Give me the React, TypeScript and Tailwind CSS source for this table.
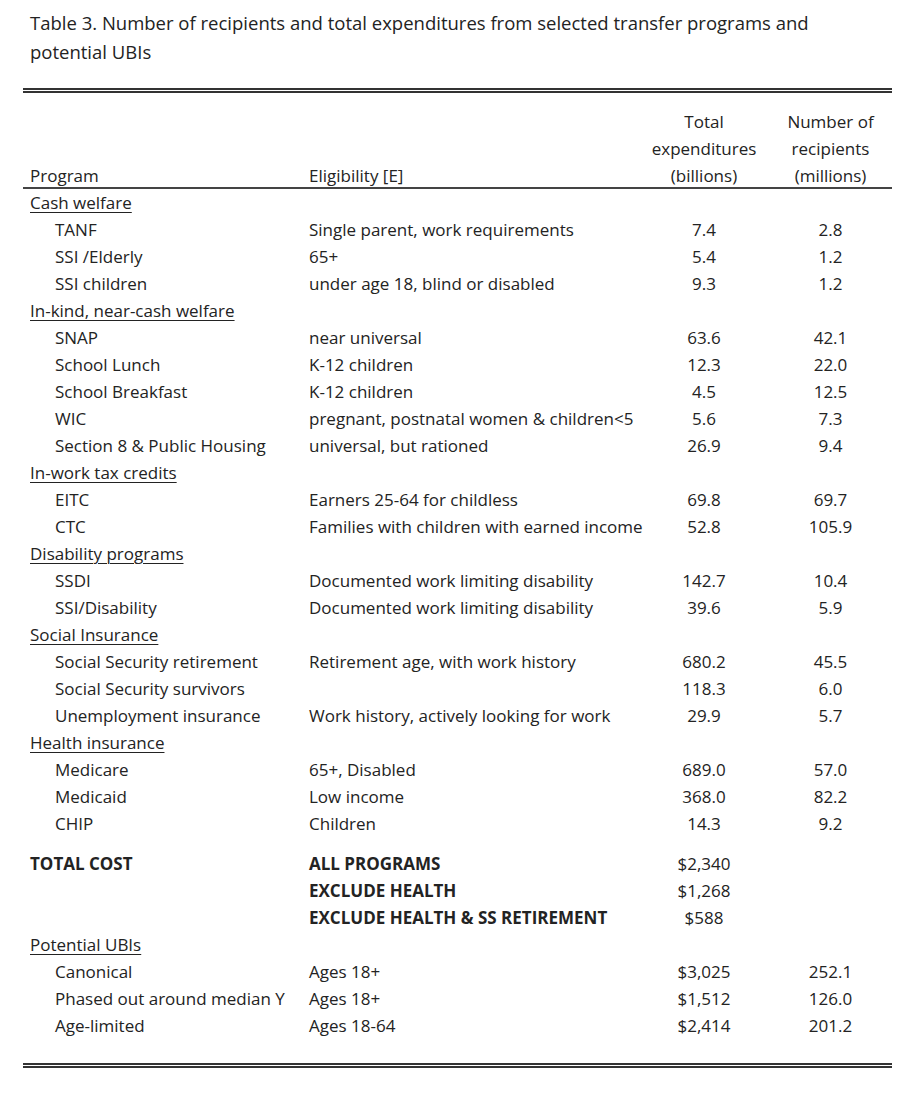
type Row = {
  name: string
  elig?: string
  exp?: string
  rec?: string
}

type Group = {
  title: string
  rows: Row[]
}

const groups: Group[] = [
  {
    title: 'Cash welfare',
    rows: [
      { name: 'TANF', elig: 'Single parent, work requirements', exp: '7.4', rec: '2.8' },
      { name: 'SSI /Elderly', elig: '65+', exp: '5.4', rec: '1.2' },
      { name: 'SSI children', elig: 'under age 18, blind or disabled', exp: '9.3', rec: '1.2' },
    ],
  },
  {
    title: 'In-kind, near-cash welfare',
    rows: [
      { name: 'SNAP', elig: 'near universal', exp: '63.6', rec: '42.1' },
      { name: 'School Lunch', elig: 'K-12 children', exp: '12.3', rec: '22.0' },
      { name: 'School Breakfast', elig: 'K-12 children', exp: '4.5', rec: '12.5' },
      { name: 'WIC', elig: 'pregnant, postnatal women & children<5', exp: '5.6', rec: '7.3' },
      { name: 'Section 8 & Public Housing', elig: 'universal, but rationed', exp: '26.9', rec: '9.4' },
    ],
  },
  {
    title: 'In-work tax credits',
    rows: [
      { name: 'EITC', elig: 'Earners 25-64 for childless', exp: '69.8', rec: '69.7' },
      { name: 'CTC', elig: 'Families with children with earned income', exp: '52.8', rec: '105.9' },
    ],
  },
  {
    title: 'Disability programs',
    rows: [
      { name: 'SSDI', elig: 'Documented work limiting disability', exp: '142.7', rec: '10.4' },
      { name: 'SSI/Disability', elig: 'Documented work limiting disability', exp: '39.6', rec: '5.9' },
    ],
  },
  {
    title: 'Social Insurance',
    rows: [
      { name: 'Social Security retirement', elig: 'Retirement age, with work history', exp: '680.2', rec: '45.5' },
      { name: 'Social Security survivors', exp: '118.3', rec: '6.0' },
      { name: 'Unemployment insurance', elig: 'Work history, actively looking for work', exp: '29.9', rec: '5.7' },
    ],
  },
  {
    title: 'Health insurance',
    rows: [
      { name: 'Medicare', elig: '65+, Disabled', exp: '689.0', rec: '57.0' },
      { name: 'Medicaid', elig: 'Low income', exp: '368.0', rec: '82.2' },
      { name: 'CHIP', elig: 'Children', exp: '14.3', rec: '9.2' },
    ],
  },
]

const totals = [
  { name: 'TOTAL COST', elig: 'ALL PROGRAMS', exp: '$2,340' },
  { name: '', elig: 'EXCLUDE HEALTH', exp: '$1,268' },
  { name: '', elig: 'EXCLUDE HEALTH & SS RETIREMENT', exp: '$588' },
]

const ubis: Row[] = [
  { name: 'Canonical', elig: 'Ages 18+', exp: '$3,025', rec: '252.1' },
  { name: 'Phased out around median Y', elig: 'Ages 18+', exp: '$1,512', rec: '126.0' },
  { name: 'Age-limited', elig: 'Ages 18-64', exp: '$2,414', rec: '201.2' },
]

const cols = 'grid grid-cols-[286px_335px_120px_133px]'

function DataRow({ row }: { row: Row }) {
  return (
    <div className={`${cols} h-[27px] items-center whitespace-nowrap`}>
      <div className="pl-[32px]">{row.name}</div>
      <div>{row.elig}</div>
      <div className="text-center">{row.exp}</div>
      <div className="text-center">{row.rec}</div>
    </div>
  )
}

function GroupTitle({ title }: { title: string }) {
  return (
    <div className="h-[27px] flex items-center pl-[7px] whitespace-nowrap">
      <span className="underline decoration-1 underline-offset-[3px]">{title}</span>
    </div>
  )
}

export default function App() {
  return (
    <div className="w-[915px] h-[1107px] bg-white text-[#232323] font-['Open_Sans',sans-serif] text-[17px]">
      {/* caption */}
      <div className="pl-[30px] pt-[8px] text-[18.5px] leading-[29px]">
        <p>Table 3. Number of recipients and total expenditures from selected transfer programs and</p>
        <p>potential UBIs</p>
      </div>

      <div className="mx-[23px] mt-[22px]">
        <div className="h-[5px] border-y-2 border-[#333]" />

        {/* header */}
        <div className={`${cols} pt-[15px] leading-[27px] border-b-2 border-[#444]`}>
          <div className="pl-[7px] self-end -mb-[2px]">Program</div>
          <div className="self-end -mb-[2px]">Eligibility [E]</div>
          <div className="text-center -mb-[2px]">
            Total
            <br />
            expenditures
            <br />
            (billions)
          </div>
          <div className="text-center -mb-[2px]">
            Number of
            <br />
            recipients
            <br />
            (millions)
          </div>
        </div>

        {groups.map((g) => (
          <div key={g.title}>
            <GroupTitle title={g.title} />
            {g.rows.map((r) => (
              <DataRow key={r.name} row={r} />
            ))}
          </div>
        ))}

        <div className="h-[13px]" />

        {totals.map((t) => (
          <div key={t.elig} className={`${cols} h-[27px] items-center whitespace-nowrap`}>
            <div className="pl-[7px] font-bold">{t.name}</div>
            <div className="font-bold">{t.elig}</div>
            <div className="text-center">{t.exp}</div>
            <div />
          </div>
        ))}

        <GroupTitle title="Potential UBIs" />
        {ubis.map((r) => (
          <DataRow key={r.name} row={r} />
        ))}

        <div className="h-[24px]" />
        <div className="h-[5px] border-y-2 border-[#333]" />
      </div>
    </div>
  )
}
